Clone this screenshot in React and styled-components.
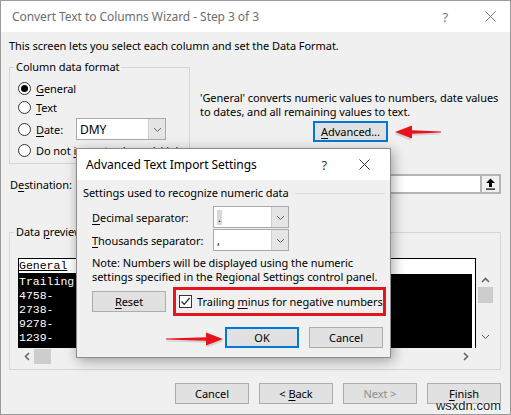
import React from 'react';
import styled, { createGlobalStyle, css } from 'styled-components';

const GlobalStyle = createGlobalStyle`
  html, body {
    margin: 0;
    padding: 0;
    background: #fff;
  }
  * {
    box-sizing: border-box;
  }
  body {
    font-family: 'Noto Sans', 'Open Sans', sans-serif;
    font-size: 11px;
    letter-spacing: -0.06px;
    color: #000;
  }
`;

const Window = styled.div`
  position: relative;
  width: 511px;
  height: 415px;
  border: 1px solid #9a9a9a;
  background: #f0f0f0;
  overflow: hidden;
`;

const TitleBar = styled.div`
  height: 31px;
  background: #fff;
  display: flex;
  align-items: center;
  justify-content: space-between;
  padding: 0 ${(p) => p.$right || 14}px 0 ${(p) => p.$left || 11}px;
  font-size: 12px;
  color: ${(p) => (p.$active ? '#000' : '#6e6e6e')};
`;

const TitleButtons = styled.div`
  display: flex;
  align-items: center;
  gap: ${(p) => p.$gap || 34}px;
  color: #777;
`;

const Intro = styled.div`
  margin: 6px 0 0 8px;
  line-height: 16px;
`;

const FormatRow = styled.div`
  display: flex;
  margin-top: 5px;
`;

const GroupBox = styled.fieldset`
  margin: 0 0 0 8px;
  padding: 0;
  width: ${(p) => p.$width}px;
  height: ${(p) => p.$height}px;
  border: 1px solid #d5d5d5;
  min-width: 0;
`;

const Legend = styled.legend`
  margin-left: 4px;
  padding: 0 2px;
  line-height: 16px;
`;

const RadioList = styled.div`
  display: flex;
  flex-direction: column;
  padding: 5px 0 0 8px;
`;

const RadioRow = styled.div`
  display: flex;
  align-items: center;
  height: ${(p) => p.$h || 16}px;
  margin-bottom: ${(p) => p.$gap ?? 3}px;
  white-space: nowrap;
`;

const RadioCircle = styled.span`
  width: 13px;
  height: 13px;
  border-radius: 50%;
  border: 1px solid #333;
  background: #fff;
  display: flex;
  align-items: center;
  justify-content: center;
  margin-right: 5px;
  flex: none;
  &::after {
    content: '';
    width: 7px;
    height: 7px;
    border-radius: 50%;
    background: ${(p) => (p.$checked ? '#000' : 'transparent')};
  }
`;

const Key = styled.span`
  text-decoration: underline;
  text-underline-offset: 2px;
`;

const DateLabel = styled.span`
  width: 40px;
`;

const Combo = styled.div`
  display: flex;
  width: ${(p) => p.$w}px;
  height: ${(p) => p.$h || 22}px;
  border: 1px solid #a9a9a9;
  background: #fff;
`;

const ComboValue = styled.div`
  flex: 1;
  display: flex;
  align-items: center;
  padding-left: 3px;
  font-size: ${(p) => (p.$big ? 12 : 11)}px;
`;

const ComboArrow = styled.div`
  width: 17px;
  background: #e5e5e5;
  border-left: 1px solid #cfcfcf;
  display: flex;
  align-items: center;
  justify-content: center;
`;

const FormatInfo = styled.div`
  margin-left: 10px;
  padding-top: 32px;
  line-height: 14px;
  white-space: nowrap;
`;

const Button = styled.div`
  width: ${(p) => p.$w || 74}px;
  height: 21px;
  flex: none;
  display: flex;
  align-items: center;
  justify-content: center;
  background: #e1e1e1;
  border: 1px solid #adadad;
  color: ${(p) => (p.$disabled ? '#8d8d8d' : '#000')};
  ${(p) =>
    p.$focused &&
    css`
      border: 2px solid #0078d7;
    `}
`;

const AdvancedButton = styled(Button)`
  margin: 2px 0 0 113px;
`;

const DestRow = styled.div`
  display: flex;
  align-items: center;
  height: 20px;
  margin: 10px 0 0 9px;
`;

const DestInput = styled.div`
  margin-left: 10px;
  flex: 1;
  height: 20px;
  background: #fff;
  border: 2px solid #b4b4b4;
  border-right: none;
`;

const RefButton = styled.div`
  width: 21px;
  height: 20px;
  margin-right: 9px;
  border: 2px solid #b4b4b4;
  background: #f0f0f0;
  display: flex;
  align-items: center;
  justify-content: center;
`;

const PreviewGroup = styled(GroupBox)`
  margin-top: 30px;
`;

const PreviewInner = styled.div`
  padding: 18px 0 0 8px;
  display: grid;
  grid-template-columns: 458px 18px;
`;

const PreviewHeader = styled.div`
  height: 16px;
  background: #fff;
  border: 1px solid #000;
  border-bottom: none;
  font-family: 'Liberation Mono', monospace;
  font-size: 11.5px;
  letter-spacing: 0;
  line-height: 14px;
`;

const HeaderCell = styled.span`
  display: inline-block;
  width: 64px;
  border-bottom: 1px solid #000;
  text-decoration: underline;
`;

const DataFrame = styled.div`
  grid-column: 1;
  height: 74px;
  border-left: 1px solid #000;
  border-right: 1px solid #000;
  background: #fff;
  padding-right: 3px;
`;

const DataBlack = styled.div`
  height: 100%;
  background: #000;
  color: #fff;
  font-family: 'Liberation Mono', monospace;
  font-size: 11.5px;
  letter-spacing: 0;
  line-height: 14px;
  padding-top: 1px;
`;

const VScroll = styled.div`
  grid-column: 2;
  display: flex;
  flex-direction: column;
  align-items: center;
  padding: 2px 0 0 1px;
`;

const ScrollThumb = styled.div`
  width: ${(p) => p.$w}px;
  height: ${(p) => p.$h}px;
  background: #cdcdcd;
`;

const HScroll = styled.div`
  grid-column: 1;
  height: 17px;
  display: flex;
  align-items: center;
  padding-left: 5px;
  padding-right: 6px;
`;

const Spacer = styled.div`
  flex: 1;
`;

const Footer = styled.div`
  display: flex;
  justify-content: flex-end;
  gap: 10px;
  margin-top: 13px;
  padding-right: 9px;
`;

const Watermark = styled.div`
  position: absolute;
  right: 9px;
  bottom: 2px;
  font-family: 'Liberation Sans', Arial, sans-serif;
  font-size: 13px;
  line-height: 13px;
  letter-spacing: 0;
  color: #222;
  text-shadow: 0 0 2px #fff, 0 0 2px #fff;
`;

const Dialog = styled.div`
  position: absolute;
  left: 75px;
  top: 147px;
  width: 315px;
  height: 210px;
  border: 1px solid #8c8c8c;
  background: #f0f0f0;
  box-shadow: 2px 3px 12px rgba(0, 0, 0, 0.35);
`;

const DialogBody = styled.div`
  padding: 5px 5px 0 6px;
`;

const SectionHead = styled.div`
  display: flex;
  align-items: center;
  line-height: 16px;
  white-space: nowrap;
  &::after {
    content: '';
    flex: 1;
    height: 1px;
    background: #dcdcdc;
    margin-left: 6px;
  }
`;

const SepRow = styled.div`
  display: flex;
  align-items: center;
  height: 22px;
  margin-top: ${(p) => p.$mt}px;
  padding-left: 9px;
`;

const SepLabel = styled.span`
  width: 121px;
`;

const Note = styled.div`
  margin-top: 5px;
  padding-left: 9px;
  line-height: 14px;
  white-space: nowrap;
`;

const ActionRow = styled.div`
  display: flex;
  align-items: center;
  gap: 7px;
  margin-top: 3px;
  padding-left: 9px;
`;

const Highlight = styled.div`
  width: 216px;
  height: 29px;
  border: 3px solid #e3161e;
  display: flex;
  align-items: center;
  padding-left: 3px;
  white-space: nowrap;
`;

const CheckBox = styled.span`
  width: 13px;
  height: 13px;
  border: 1px solid #333;
  background: #fff;
  margin-right: 5px;
  display: flex;
  align-items: center;
  justify-content: center;
  flex: none;
`;

const DialogButtons = styled.div`
  display: flex;
  justify-content: flex-end;
  gap: 10px;
  margin-top: 11px;
  padding-right: 2px;
`;

const ArrowMark = styled.svg`
  position: absolute;
  left: ${(p) => p.$x}px;
  top: ${(p) => p.$y}px;
  overflow: visible;
`;

const Chevron = ({ dir = 'down', color = '#666', size = 9 }) => {
  const paths = {
    down: 'M1 3 L4.5 6.5 L8 3',
    up: 'M1 6 L4.5 2.5 L8 6',
    left: 'M6 1 L2.5 4.5 L6 8',
    right: 'M3 1 L6.5 4.5 L3 8',
  };
  return (
    <svg width={size} height={size} viewBox='0 0 9 9'>
      <path d={paths[dir]} fill='none' stroke={color} strokeWidth={dir === 'down' ? 1 : 1.6} />
    </svg>
  );
};

const CloseIcon = ({ color = '#555' }) => (
  <svg width='11' height='11' viewBox='0 0 11 11'>
    <path d='M0.5 0.5 L10.5 10.5 M10.5 0.5 L0.5 10.5' stroke={color} strokeWidth='1' />
  </svg>
);

const UpArrowIcon = () => (
  <svg width='11' height='12' viewBox='0 0 11 12'>
    <path d='M5.5 0.5 L10 5 L7 5 L7 9 L4 9 L4 5 L1 5 Z' fill='#000' />
    <rect x='1' y='10.5' width='9' height='1.2' fill='#000' />
  </svg>
);

const CheckMark = () => (
  <svg width='11' height='11' viewBox='0 0 11 11'>
    <path d='M1.5 5.5 L4.2 8.3 L9.6 2' fill='none' stroke='#222' strokeWidth='1.2' />
  </svg>
);

// red annotation arrow, pointing right unless flipped
const RedArrow = ({ x, y, length, flip }) => {
  const L = length;
  const head = 17;
  const pts = `0,6.4 ${L - head},5.2 ${L - head},0.5 ${L},7 ${L - head},13.5 ${L - head},8.8 0,7.6`;
  return (
    <ArrowMark $x={x} $y={y} width={L} height={14} viewBox={`0 0 ${L} 14`}>
      <g transform={flip ? `translate(${L},0) scale(-1,1)` : undefined}>
        <polygon points={pts} fill='#000' opacity='0.12' transform='translate(1,2)' />
        <polygon points={pts} fill='#e8131b' />
      </g>
    </ArrowMark>
  );
};

const previewRows = ['Trailing', '4758-', '2738-', '9278-', '1239-'];

const App = () => {
  return (
    <>
      <GlobalStyle />
      <Window>
        <TitleBar>
          <span>Convert Text to Columns Wizard - Step 3 of 3</span>
          <TitleButtons $gap={37}>
            <span style={{ fontSize: 13 }}>?</span>
            <CloseIcon color='#777' />
          </TitleButtons>
        </TitleBar>

        <Intro>This screen lets you select each column and set the Data Format.</Intro>

        <FormatRow>
          <GroupBox $width={181} $height={105}>
            <Legend>Column data format</Legend>
            <RadioList>
              <RadioRow>
                <RadioCircle $checked />
                <span>
                  <Key>G</Key>eneral
                </span>
              </RadioRow>
              <RadioRow>
                <RadioCircle />
                <span>
                  <Key>T</Key>ext
                </span>
              </RadioRow>
              <RadioRow $h={22} $gap={2}>
                <RadioCircle />
                <DateLabel>
                  <Key>D</Key>ate:
                </DateLabel>
                <Combo $w={90}>
                  <ComboValue $big>DMY</ComboValue>
                  <ComboArrow>
                    <Chevron />
                  </ComboArrow>
                </Combo>
              </RadioRow>
              <RadioRow>
                <RadioCircle />
                <span>
                  Do not <Key>i</Key>mport column (skip)
                </span>
              </RadioRow>
            </RadioList>
          </GroupBox>

          <FormatInfo>
            'General' converts numeric values to numbers, date values
            <br />
            to dates, and all remaining values to text.
            <AdvancedButton $w={75} $focused>
              <span>
                <Key>A</Key>dvanced...
              </span>
            </AdvancedButton>
          </FormatInfo>
        </FormatRow>

        <DestRow>
          <span>
            D<Key>e</Key>stination:
          </span>
          <DestInput />
          <RefButton>
            <UpArrowIcon />
          </RefButton>
        </DestRow>

        <PreviewGroup $width={492} $height={146}>
          <Legend>
            Data <Key>p</Key>review
          </Legend>
          <PreviewInner>
            <PreviewHeader>
              <HeaderCell>General</HeaderCell>
            </PreviewHeader>
            <div />
            <DataFrame>
              <DataBlack>
                {previewRows.map((r) => (
                  <div key={r}>{r}</div>
                ))}
              </DataBlack>
            </DataFrame>
            <VScroll>
              <Chevron dir='up' />
              <ScrollThumb $w={15} $h={16} style={{ marginTop: 2 }} />
              <Spacer />
              <div style={{ marginBottom: 4 }}>
                <Chevron dir='down' color='#555' />
              </div>
            </VScroll>
            <HScroll>
              <Chevron dir='left' />
              <ScrollThumb $w={17} $h={15} style={{ marginLeft: 2 }} />
              <Spacer />
              <Chevron dir='right' />
            </HScroll>
          </PreviewInner>
        </PreviewGroup>

        <Footer>
          <Button>Cancel</Button>
          <Button>
            <span>
              &lt; <Key>B</Key>ack
            </span>
          </Button>
          <Button $disabled>Next &gt;</Button>
          <Button>
            <span>
              <Key>F</Key>inish
            </span>
          </Button>
        </Footer>

        <RedArrow x={394} y={124} length={46} flip />

        <Dialog>
          <TitleBar $active $left={9} $right={20}>
            <span>Advanced Text Import Settings</span>
            <TitleButtons $gap={32}>
              <span style={{ fontSize: 13, color: '#333' }}>?</span>
              <CloseIcon color='#333' />
            </TitleButtons>
          </TitleBar>
          <DialogBody>
            <SectionHead>Settings used to recognize numeric data</SectionHead>
            <SepRow $mt={5}>
              <SepLabel>
                <Key>D</Key>ecimal separator:
              </SepLabel>
              <Combo $w={76}>
                <ComboValue>
                  <span style={{ background: '#d8d8d8', padding: '0 1px' }}>.</span>
                </ComboValue>
                <ComboArrow>
                  <Chevron />
                </ComboArrow>
              </Combo>
            </SepRow>
            <SepRow $mt={1}>
              <SepLabel>
                <Key>T</Key>housands separator:
              </SepLabel>
              <Combo $w={76}>
                <ComboValue>,</ComboValue>
                <ComboArrow>
                  <Chevron />
                </ComboArrow>
              </Combo>
            </SepRow>
            <Note>
              Note: Numbers will be displayed using the numeric
              <br />
              settings specified in the Regional Settings control panel.
            </Note>
            <ActionRow>
              <Button $w={74}>
                <span>
                  <Key>R</Key>eset
                </span>
              </Button>
              <Highlight>
                <CheckBox>
                  <CheckMark />
                </CheckBox>
                <span>
                  Trailing <Key>m</Key>inus for negative numbers
                </span>
              </Highlight>
            </ActionRow>
            <DialogButtons>
              <Button $focused>OK</Button>
              <Button>Cancel</Button>
            </DialogButtons>
          </DialogBody>
        </Dialog>

        <RedArrow x={165} y={331} length={57} />

        <Watermark>wsxdn.com</Watermark>
      </Window>
    </>
  );
};

export default App;
